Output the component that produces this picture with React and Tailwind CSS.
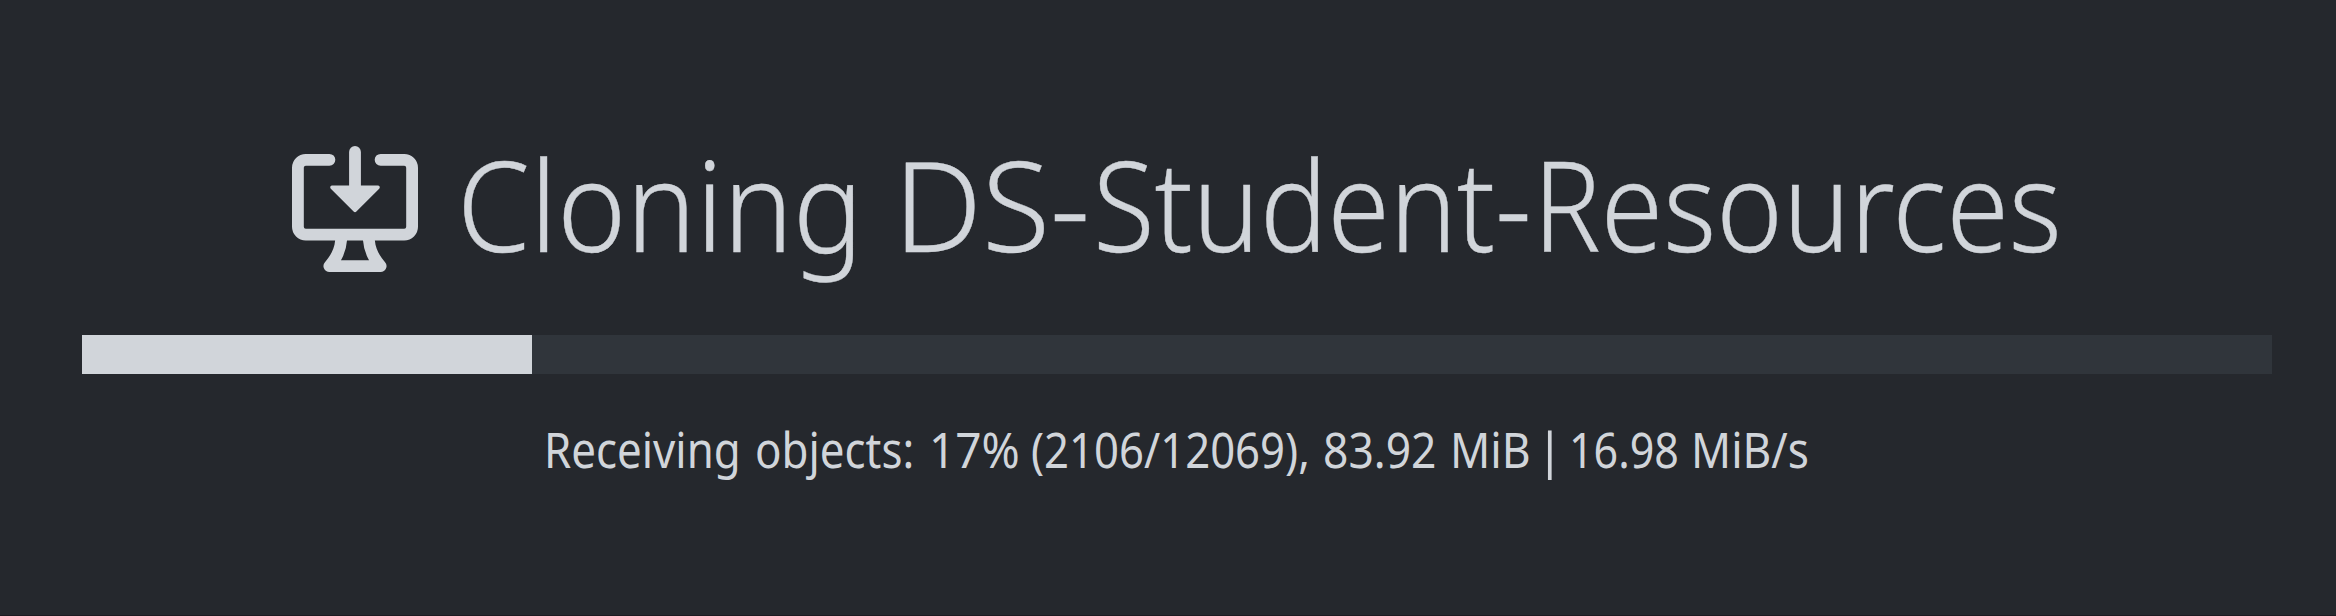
const titleWords = [
  { text: "Cloning", className: "w-[437px]", scale: "scale-x-[0.94]" },
  { text: "DS-", className: "w-[199.5px]", scale: "scale-x-[1]" },
  { text: "Student-", className: "w-[439.5px]", scale: "scale-x-[0.905]" },
  { text: "Resources", className: "w-[540px]", scale: "scale-x-[0.908]" },
];

const statusWords = [
  { text: "Receiving", className: "w-[211.5px]", scale: "scale-x-[0.877]" },
  { text: "objects:", className: "w-[174px]", scale: "scale-x-[0.877]" },
  { text: "17%", className: "w-[102px]", scale: "scale-x-[0.92]" },
  { text: "(2106/12069),", className: "w-[292px]", scale: "scale-x-[0.873]" },
  { text: "83.92", className: "w-[127px]", scale: "scale-x-[0.888]" },
  { text: "MiB", className: "w-[86px]", scale: "scale-x-[0.89]" },
  { text: "|", className: "w-[32.5px]", scale: "scale-x-100" },
  { text: "16.98", className: "w-[122.5px]", scale: "scale-x-[0.86]" },
  { text: "MiB/s", className: "w-[140px]", scale: "scale-x-[0.885]" },
];

// Each word is condensed inside a box of its own width.
function Words({ items }) {
  return items.map((w) => (
    <span key={w.text} className={`block shrink-0 ${w.className}`}>
      <span className={`inline-block origin-left ${w.scale}`}>{w.text}</span>
    </span>
  ));
}

function DownloadIcon() {
  return (
    <svg viewBox="0 0 16 16" className="h-[126px] w-[126px] shrink-0" fill="currentColor">
      <path d="M4.927 5.427l2.896 2.896a.25.25 0 00.354 0l2.896-2.896A.25.25 0 0010.896 5H8.75V.75a.75.75 0 10-1.5 0V5H5.104a.25.25 0 00-.177.427z" />
      <path d="M1.573 2.573a.25.25 0 00-.073.177v7.5a.25.25 0 00.25.25h12.5a.25.25 0 00.25-.25v-7.5a.25.25 0 00-.25-.25h-3a.75.75 0 110-1.5h3A1.75 1.75 0 0116 2.75v7.5A1.75 1.75 0 0114.25 12h-3.727c.099 1.041.52 1.872 1.292 2.757A.75.75 0 0111.25 16h-6.5a.75.75 0 01-.565-1.243c.772-.885 1.192-1.716 1.292-2.757H1.75A1.75 1.75 0 010 10.25v-7.5A1.75 1.75 0 011.75 1h3a.75.75 0 010 1.5h-3a.25.25 0 00-.177.073zM6.982 12a5.72 5.72 0 01-.765 2.5h3.566a5.72 5.72 0 01-.765-2.5H6.982z" />
    </svg>
  );
}

export default function App() {
  return (
    <main className="flex h-[616px] w-[2336px] flex-col overflow-hidden border-b border-[#1d1a21] bg-[#25282d] pt-[146px] pr-[64px] pl-[82px] font-['Noto_Sans',sans-serif] text-[#d1d5da]">
      <div className="flex h-[127px] items-start pl-[210px]">
        <DownloadIcon />
        <h1 className="flex pl-[38.5px] text-[124.5px] leading-[115px] font-light whitespace-nowrap [-webkit-text-stroke:0.4px_#d1d5da]">
          <Words items={titleWords} />
        </h1>
      </div>
      <div className="mt-[62px] h-[39px] w-full bg-[#30353b]">
        <div className="h-full w-[450px] bg-[#d1d5da]" />
      </div>
      <p className="mt-[40px] flex pl-[461.5px] text-[50px] leading-[70px] whitespace-nowrap">
        <Words items={statusWords} />
      </p>
    </main>
  );
}
